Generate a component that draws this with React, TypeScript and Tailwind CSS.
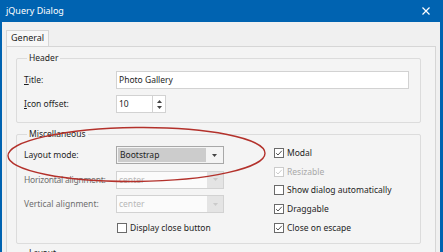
import React from "react";

const Check = ({ checked, disabled }: { checked: boolean; disabled?: boolean }) => (
  <span
    className={`flex h-[10px] w-[10px] shrink-0 items-center justify-center border bg-white ${
      disabled ? "border-[#cccccc]" : "border-[#6a6a6a]"
    }`}
  >
    {checked && (
      <svg width="8" height="8" viewBox="0 0 8 8">
        <path
          d="M1.2 4.2 L3 6 L6.8 1.8"
          fill="none"
          stroke={disabled ? "#c4c4c4" : "#3a3a3a"}
          strokeWidth="0.9"
        />
      </svg>
    )}
  </span>
);

const CheckRow = ({ label, checked, disabled }: { label: string; checked: boolean; disabled?: boolean }) => (
  <div className="flex h-[18.75px] items-center gap-[3px]">
    <Check checked={checked} disabled={disabled} />
    <span className={disabled ? "text-[#a8a8a8]" : "text-[#1e1e1e]"}>{label}</span>
  </div>
);

const Arrow = ({ color }: { color: string }) => (
  <svg width="5" height="3" viewBox="0 0 5 3">
    <path d="M0 0 L5 0 L2.5 3 Z" fill={color} />
  </svg>
);

const Select = ({ value, disabled }: { value: string; disabled?: boolean }) =>
  disabled ? (
    <div className="flex h-[18px] w-[108px] border border-[#d2d2d2] bg-[#fbfbfb]">
      <span className="flex flex-1 items-center pl-[2px] text-[#b8b8b8]">{value}</span>
      <span className="flex w-[16px] items-center justify-center bg-[#e4e4e4]">
        <Arrow color="#cacaca" />
      </span>
    </div>
  ) : (
    <div className="flex h-[18px] w-[108px] border border-[#a8a8a8] bg-[#f4f4f4] p-[1px]">
      <span className="flex flex-1 items-center bg-[#cccccc] pl-[2px] text-[#1e1e1e]">{value}</span>
      <span className="flex w-[16px] items-center justify-center">
        <Arrow color="#444444" />
      </span>
    </div>
  );

export default function App() {
  return (
    <div className="relative h-[252px] w-[443px] overflow-hidden bg-[#0063b1] font-['Noto_Sans',sans-serif] text-[8.5px] leading-[12px] text-[#1e1e1e]">
      {/* title bar */}
      <div className="flex h-[22px] items-center justify-between pl-[6px] pr-[13px] text-[9px] text-white">
        <span>jQuery Dialog</span>
        <svg width="8" height="8" viewBox="0 0 8 8">
          <path d="M0.5 0.5 L7.5 7.5 M7.5 0.5 L0.5 7.5" stroke="white" strokeWidth="1.2" />
        </svg>
      </div>

      {/* body */}
      <div className="ml-[2px] mr-[3px] h-[230px] bg-[#f0f0f0] pl-[4px] pr-[4px] pt-[8px]">
        <div className="flex">
          <div className="h-[16px] border border-b-0 border-[#d6d6d6] bg-[#f7f7f7] px-[4px] pt-[1px] text-[9px]">
            General
          </div>
        </div>
        <div className="h-[220px] border border-[#d6d6d6] bg-[#f4f4f4] pl-[9px] pr-[14px] pt-[5px]">
          {/* Header group */}
          <fieldset className="rounded-[2px] border border-[#dcdcdc] pb-[9px] pl-[7px] pr-[11px]">
            <legend className="ml-[3px] px-[2px] text-[#1e1e1e]">Header</legend>
            <div className="mt-[7px] flex flex-col gap-[6px]">
              <div className="flex h-[18px] items-center">
                <span className="w-[92px]">
                  <u>T</u>itle:
                </span>
                <div className="flex h-[18px] flex-1 items-center border border-[#d2d2d2] bg-white pl-[2px]">
                  Photo Gallery
                </div>
              </div>
              <div className="flex h-[18px] items-center">
                <span className="w-[92px]">
                  <u>I</u>con offset:
                </span>
                <div className="flex h-[18px] w-[37px] items-center border border-[#d2d2d2] bg-white pl-[2px]">
                  10
                </div>
                <div className="flex h-[18px] w-[13px] flex-col items-center justify-center gap-[3px] border border-l-0 border-[#d2d2d2] bg-white">
                  <svg width="5" height="3" viewBox="0 0 5 3">
                    <path d="M0 3 L5 3 L2.5 0 Z" fill="#444444" />
                  </svg>
                  <Arrow color="#444444" />
                </div>
              </div>
            </div>
          </fieldset>

          {/* Miscellaneous group */}
          <fieldset className="mt-[5px] h-[116px] rounded-[2px] border border-[#dcdcdc] pl-[7px] pr-[11px]">
            <legend className="ml-[3px] px-[2px] text-[#1e1e1e]">Miscellaneous</legend>
            <div className="mt-[6px] flex">
              <div className="flex flex-col gap-[6.5px]">
                <div className="flex items-center">
                  <span className="w-[92px]">Layout mode:</span>
                  <Select value="Bootstrap" />
                </div>
                <div className="flex items-center">
                  <span className="w-[92px] whitespace-nowrap tracking-[-0.25px] text-[#6e6e6e]">
                    Horizontal alignment:
                  </span>
                  <Select value="center" disabled />
                </div>
                <div className="flex items-center">
                  <span className="w-[92px] text-[#6e6e6e]">Vertical alignment:</span>
                  <Select value="center" disabled />
                </div>
                <div className="ml-[93px] flex h-[16px] items-center gap-[3px]">
                  <Check checked={false} />
                  <span>Display close button</span>
                </div>
              </div>
              <div className="-mt-[2.5px] ml-[50px] flex flex-col">
                <CheckRow label="Modal" checked />
                <CheckRow label="Resizable" checked disabled />
                <CheckRow label="Show dialog automatically" checked={false} />
                <CheckRow label="Draggable" checked />
                <CheckRow label="Close on escape" checked />
              </div>
            </div>
          </fieldset>

          <fieldset className="mt-[3px] h-[40px] rounded-[2px] border border-[#dcdcdc] pl-[7px]">
            <legend className="ml-[3px] px-[2px]">Layout</legend>
          </fieldset>
        </div>
      </div>

      {/* annotation ellipse */}
      <svg className="pointer-events-none absolute left-0 top-0" width="443" height="252">
        <ellipse
          cx="136.5"
          cy="154.5"
          rx="128.5"
          ry="27"
          transform="rotate(-0.6 136.5 154.5)"
          fill="none"
          stroke="#b3312b"
          strokeWidth="1.4"
        />
      </svg>
    </div>
  );
}
